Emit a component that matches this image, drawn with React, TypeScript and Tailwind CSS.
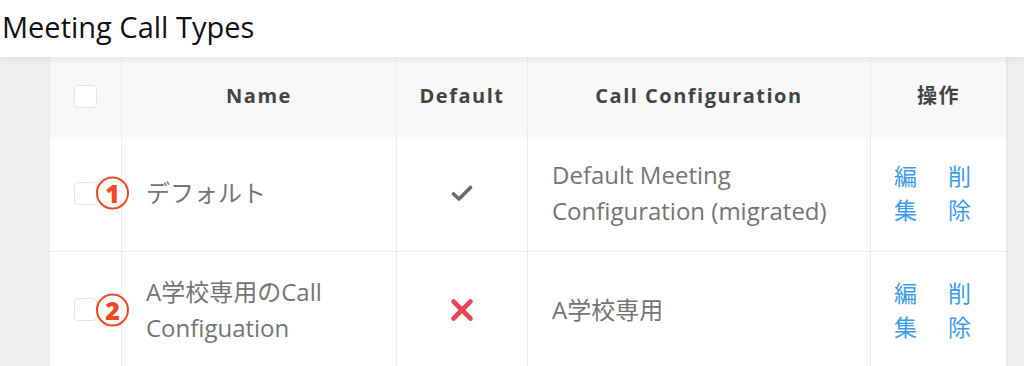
import type { ReactNode } from 'react';

// Meeting Call Types list: header bar, then a bordered table with two rows.

const cols = 'grid grid-cols-[72px_275px_131px_343px_135px]';

type Row = {
  mark: string;
  name: ReactNode;
  isDefault: boolean;
  config: ReactNode;
};

const rows: Row[] = [
  {
    mark: '1',
    name: 'デフォルト',
    isDefault: true,
    config: (
      <>
        Default Meeting
        <br />
        Configuration (migrated)
      </>
    ),
  },
  {
    mark: '2',
    name: (
      <>
        A学校専用のCall
        <br />
        Configuation
      </>
    ),
    isDefault: false,
    config: 'A学校専用',
  },
];

function Checkbox() {
  return <span className="block h-[23px] w-[23px] rounded-[4px] border border-[#e4e4e4] bg-white" />;
}

function CheckIcon() {
  return (
    <svg width="22" height="17" viewBox="0 0 22 17" fill="none">
      <path d="M2.5 9 L8 14 L19.5 2.5" stroke="#6b6b6b" strokeWidth="3.6" strokeLinecap="round" strokeLinejoin="round" />
    </svg>
  );
}

function CrossIcon() {
  return (
    <svg width="24" height="24" viewBox="0 0 24 24" fill="none">
      <path d="M3.5 3.5 L20.5 20.5 M20.5 3.5 L3.5 20.5" stroke="#e8475a" strokeWidth="4.6" strokeLinecap="round" />
    </svg>
  );
}

function Mark({ n }: { n: string }) {
  return (
    <span className="absolute left-[46px] top-1/2 flex h-[33px] w-[33px] -translate-y-1/2 items-center justify-center rounded-full border-[2.5px] border-[#ee4a26] bg-white/40 text-[25px] font-extrabold leading-none text-[#ee4a26]">
      {n}
    </span>
  );
}

export default function App() {
  return (
    <div
      className="h-[366px] w-[1024px] overflow-hidden bg-[#efefef]"
      style={{ fontFamily: '"Open Sans", "Noto Sans CJK JP", sans-serif' }}
    >
      <div className="relative z-10 flex h-[57px] items-center bg-white pb-[4px] pl-[2px] shadow-[0_2px_8px_rgba(0,0,0,0.08)]">
        <h1 className="text-[29px] leading-none text-[#111]">Meeting Call Types</h1>
      </div>

      <div className="ml-[50px] w-[956px] bg-white shadow-[1px_0_2px_rgba(0,0,0,0.06)]">
        <div className={`${cols} relative h-[78px] bg-[#f8f8f8] text-[20px] font-bold tracking-[1.5px] text-[#444] shadow-[0_2px_3px_rgba(0,0,0,0.04)]`}>
          <div className="flex items-center justify-center border-r border-[#ececec]">
            <Checkbox />
          </div>
          <div className="flex items-center justify-center border-r border-[#ececec]">Name</div>
          <div className="flex items-center justify-center border-r border-[#ececec]">Default</div>
          <div className="flex items-center justify-center border-r border-[#ececec]">Call Configuration</div>
          <div className="flex items-center justify-center">操作</div>
        </div>

        {rows.map((r, i) => (
          <div
            key={r.mark}
            className={`${cols} h-[116px] text-[24px] leading-[36px] text-[#757575] ${i > 0 ? 'border-t border-[#eeeeee]' : ''}`}
          >
            <div className="relative flex items-center justify-center border-r border-[#ececec]">
              <Checkbox />
              <Mark n={r.mark} />
            </div>
            <div className="flex items-center border-r border-[#ececec] pl-[24px]">
              <span>{r.name}</span>
            </div>
            <div className="flex items-center justify-center border-r border-[#ececec]">
              {r.isDefault ? <CheckIcon /> : <CrossIcon />}
            </div>
            <div className="flex items-center border-r border-[#ececec] pl-[24px]">
              <span>{r.config}</span>
            </div>
            <div className="flex items-center gap-[31px] pl-[23px] text-[23px] leading-[34px] text-[#3d9be9]">
              <a className="block w-[23px] cursor-pointer break-all">編集</a>
              <a className="block w-[23px] cursor-pointer break-all">削除</a>
            </div>
          </div>
        ))}
      </div>
    </div>
  );
}
